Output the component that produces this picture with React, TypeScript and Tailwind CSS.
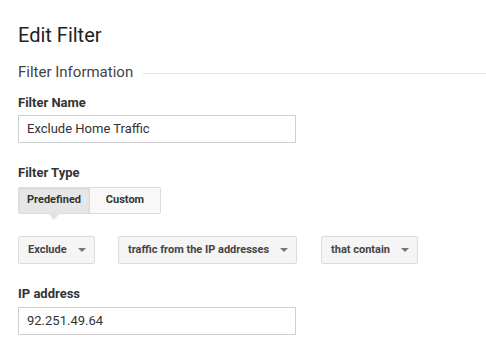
import React from "react";

const font = { fontFamily: "Roboto, 'Liberation Sans', sans-serif" };

function Caret() {
  return (
    <svg width="8" height="4" viewBox="0 0 8 4" className="shrink-0">
      <path d="M0 0h8L4 4z" fill="#777" />
    </svg>
  );
}

function Dropdown({ label, width, gap }: { label: string; width: string; gap: string }) {
  return (
    <div
      className={`flex h-[28px] items-center justify-between rounded-[2px] border border-[#dcdcdc] bg-[#f5f5f5] pl-[9px] pr-[8px] text-[11px] font-bold text-[#444] ${width} ${gap}`}
    >
      <span>{label}</span>
      <Caret />
    </div>
  );
}

export default function App() {
  return (
    <div className="h-[357px] w-[486px] overflow-hidden bg-white px-[18px] pt-[23px]" style={font}>
      <h1 className="text-[20px] leading-[24px] text-[#222]">Edit Filter</h1>

      {/* Section header */}
      <div className="mt-[16px] flex items-center gap-[10px]">
        <span className="text-[15px] leading-[18px] text-[#444]">Filter Information</span>
        <div className="mr-[-18px] mt-[2px] h-px flex-1 bg-[#e2e2e2]" />
      </div>

      {/* Filter name */}
      <div className="mt-[14px] text-[13px] font-bold leading-[16px] text-[#333]">Filter Name</div>
      <div className="mt-[4px] flex h-[28px] w-[278px] items-center border border-[#cfcfcf] px-[8px] text-[13px] text-[#333]">
        Exclude Home Traffic
      </div>

      {/* Filter type */}
      <div className="mt-[22px] text-[13px] font-bold leading-[16px] text-[#333]">Filter Type</div>
      <div className="mt-[6px] flex h-[27px] w-[143px] rounded-[2px] border border-[#dcdcdc] text-[11px] font-bold text-[#333]">
        <div className="relative flex w-[71px] items-center justify-center border-r border-[#dcdcdc] bg-[#e6e6e6] shadow-[inset_0_1px_2px_rgba(0,0,0,0.08)]">
          Predefined
          <div className="absolute left-1/2 top-full h-0 w-0 -translate-x-1/2 border-x-[6px] border-t-[7px] border-x-transparent border-t-[#e2e2e2]" />
        </div>
        <div className="flex flex-1 items-center justify-center bg-[#f8f8f8]">Custom</div>
      </div>

      {/* Filter dropdowns */}
      <div className="mt-[22px] flex">
        <Dropdown label="Exclude" width="w-[77px]" gap="" />
        <Dropdown label="traffic from the IP addresses" width="w-[179px]" gap="ml-[23px]" />
        <Dropdown label="that contain" width="w-[97px]" gap="ml-[24px]" />
      </div>

      {/* IP address */}
      <div className="mt-[22px] text-[13px] font-bold leading-[16px] text-[#333]">IP address</div>
      <div className="mt-[5px] flex h-[28px] w-[278px] items-center border border-[#cfcfcf] px-[8px] text-[13px] text-[#333]">
        92.251.49.64
      </div>
    </div>
  );
}
